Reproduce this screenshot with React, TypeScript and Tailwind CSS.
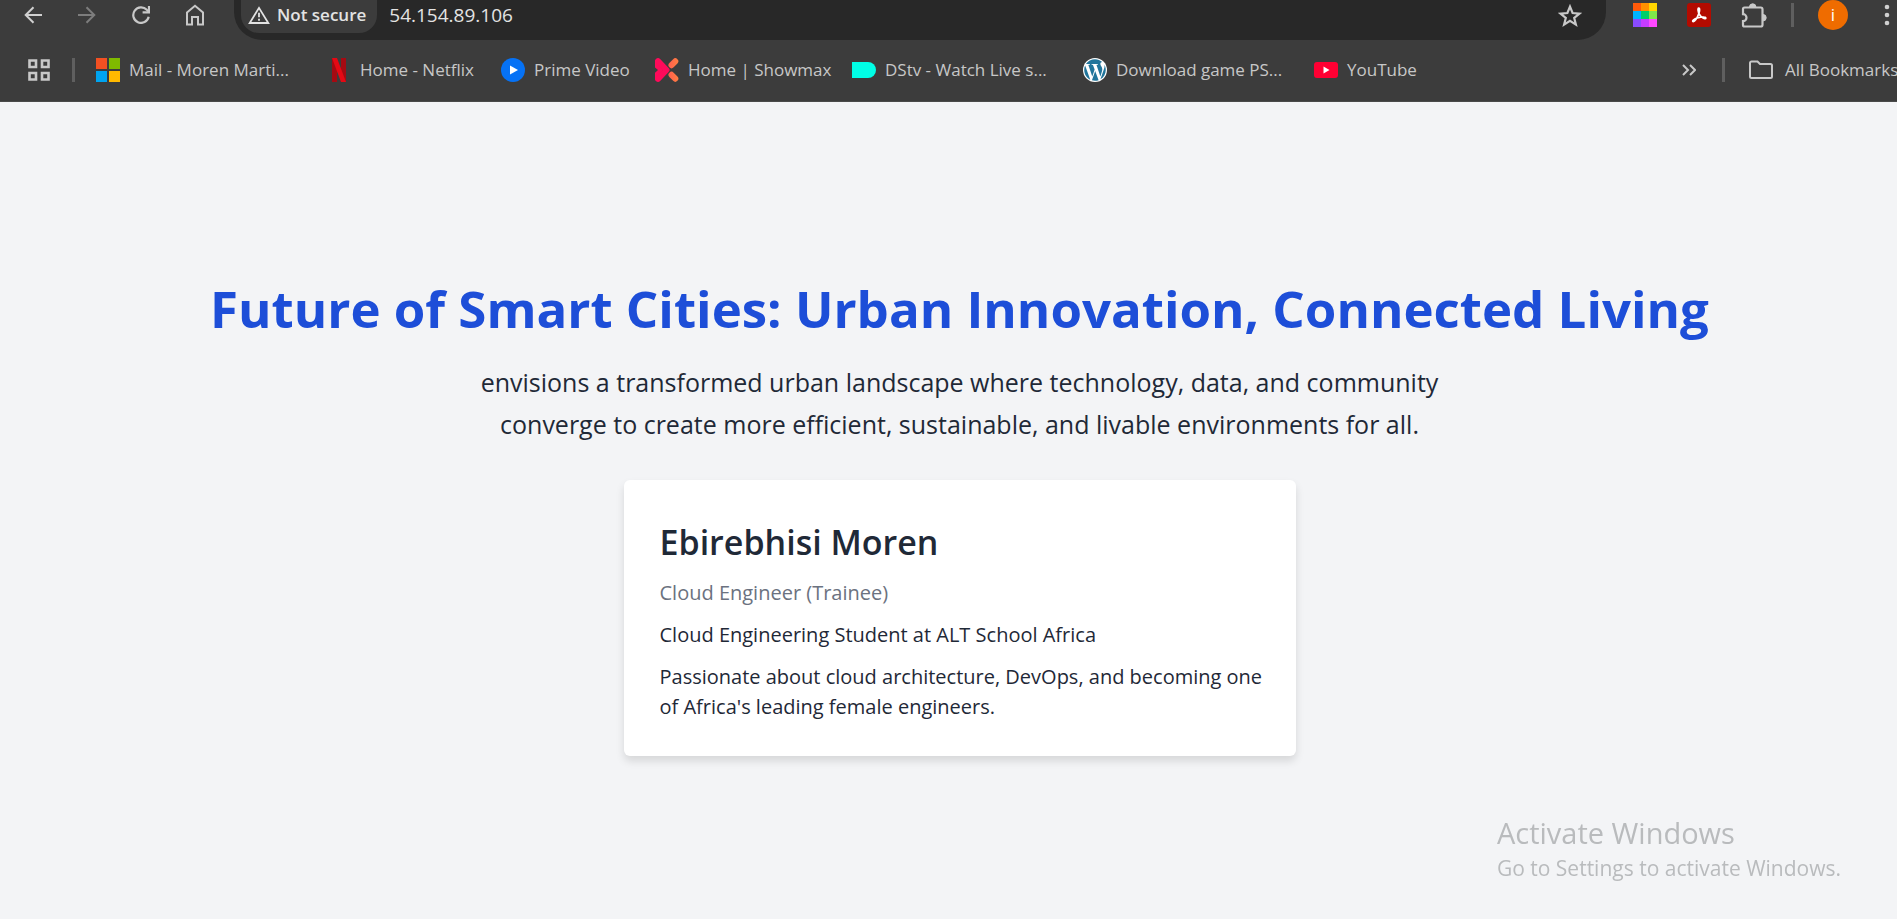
import { useId, type ReactNode } from "react";

const barIcon = "block shrink-0";

function BackIcon() {
  return (
    <svg className={barIcon} width="18" height="18" viewBox="0 0 18 18" fill="none" stroke="#d0d0d0" strokeWidth="2">
      <path d="M18 9H2M9.5 1.2 1.7 9l7.8 7.8" />
    </svg>
  );
}

function ForwardIcon() {
  return (
    <svg className={barIcon} width="18" height="18" viewBox="0 0 18 18" fill="none" stroke="#7d7d7d" strokeWidth="2">
      <path d="M0 9h16M8.5 1.2 16.3 9l-7.8 7.8" />
    </svg>
  );
}

function ReloadIcon() {
  return (
    <svg className={barIcon} width="18" height="18" viewBox="0 0 18 18" fill="none" stroke="#c8c8c8" strokeWidth="2.2">
      <path d="M16.7 10.8A7.8 7.8 0 1 1 14.8 3.8L17 6" />
      <path d="M17 0v6.4h-6.4" />
    </svg>
  );
}

function HomeIcon() {
  return (
    <svg className={barIcon} width="18" height="22" viewBox="0 0 18 22" fill="none" stroke="#c8c8c8" strokeWidth="2">
      <path d="M1 8.4 9 1.8l8 6.6v12.100h-5V13H6v7.500H1z" />
    </svg>
  );
}

function WarningIcon() {
  return (
    <svg className={barIcon} width="22" height="18" viewBox="0 0 22 18" fill="none" stroke="#e3e3e3" strokeWidth="1.8">
      <path d="M11 1.9 20.3 17H1.7z" />
      <path d="M11 6.8v4.4M11 12.8v2" />
    </svg>
  );
}

function StarIcon() {
  return (
    <svg className={barIcon} width="24" height="23" viewBox="0 0 24 23" fill="none" stroke="#c8c8c8" strokeWidth="2.2">
      <path d="m12 2.600 2.600 6.400 6.900.600-5.300 4.400 1.700 6.600L12 16.900l-5.900 3.700L7.800 14 2.500 9.600 9.400 9z" />
    </svg>
  );
}

const paletteCells = ["#ff5a0a", "#ff9100", "#ffd500", "#00b4ff", "#00cf6a", "#7de64b", "#8a4bff", "#c63cff", "#ff48ff"];

function PaletteIcon() {
  return (
    <svg className={barIcon} width="24" height="24" viewBox="0 0 24 24" shapeRendering="crispEdges">
      {paletteCells.map((fill, i) => (
        <rect key={fill} x={(i % 3) * 8} y={Math.floor(i / 3) * 8} width="8" height="8" fill={fill} />
      ))}
    </svg>
  );
}

function AcrobatIcon() {
  return (
    <svg className={barIcon} width="24" height="24" viewBox="0 0 24 24" fill="none">
      <rect width="24" height="24" rx="3" fill="#b30b00" />
      <path
        d="M11.700 5.200c1.300-.1 1 3 .2 5.100-1.100 3-3.800 8.500-5.700 8.300-1.700-.5.900-2.900 5.100-3.900 3.600-.9 7.700-1.100 7.500.6-.3 1.500-4.700-.9-6.500-4-1.200-2.200-1.900-6-.6-6.100z"
        stroke="#fff"
        strokeWidth="1.7"
      />
    </svg>
  );
}

function PuzzleIcon() {
  return (
    <svg className={barIcon} width="26" height="25" viewBox="0 0 26 25">
      <path
        d="M3.500 4.500h16.200a1.800 1.800 0 0 1 1.800 1.800v15.400a1.800 1.800 0 0 1-1.800 1.800H3.500A1.500 1.500 0 0 1 2 22v-3.800a3.400 3.400 0 0 0 0-7V6a1.500 1.500 0 0 1 1.500-1.500z"
        fill="none"
        stroke="#c8c8c8"
        strokeWidth="2.2"
      />
      <path d="M8.500 4a3.200 3.200 0 0 1 6.400 0zM22 11.500a3.200 3.200 0 0 1 0 6.400z" fill="#c8c8c8" stroke="#c8c8c8" />
    </svg>
  );
}

function MenuDotsIcon() {
  return (
    <svg className={barIcon} width="6" height="24" viewBox="0 0 6 24" fill="#d0d0d0">
      <circle cx="3" cy="4" r="2.3" />
      <circle cx="3" cy="12" r="2.3" />
      <circle cx="3" cy="20" r="2.3" />
    </svg>
  );
}

function AppsIcon() {
  return (
    <svg className={barIcon} width="22" height="22" viewBox="0 0 22 22" fill="none" stroke="#c8c8c8" strokeWidth="2.6">
      <path d="M1.500 1.500h6.500v6.500H1.500zM14 1.500h6.500v6.500H14zM1.500 14h6.500v6.500H1.500zM14 14h6.500v6.500H14z" />
    </svg>
  );
}

function MicrosoftIcon() {
  return (
    <svg className={barIcon} width="24" height="24" viewBox="0 0 24 24">
      <path fill="#f25022" d="M0 0h11v11H0z" />
      <path fill="#7fba00" d="M13 0h11v11H13z" />
      <path fill="#00a4ef" d="M0 13h11v11H0z" />
      <path fill="#ffb900" d="M13 13h11v11H13z" />
    </svg>
  );
}

function NetflixIcon() {
  return (
    <svg className={barIcon} width="24" height="24" viewBox="0 0 24 24">
      <path fill="#a50a12" d="M5 0h5v24H5zM14 0h5v24h-5z" />
      <path fill="#e50914" d="M5 0h5l9 24h-5z" />
    </svg>
  );
}

function PrimeIcon() {
  return (
    <svg className={barIcon} width="24" height="24" viewBox="0 0 24 24">
      <circle cx="12" cy="12" r="12" fill="#0672f5" />
      <path fill="#fff" d="m9 7.500 8 4.500-8 4.500z" />
    </svg>
  );
}

function ShowmaxIcon() {
  const id = useId();
  return (
    <svg className={barIcon} width="24" height="24" viewBox="0 0 24 24" fill="none" strokeLinecap="round">
      <defs>
        <linearGradient id={id} x1="12" y1="0" x2="24" y2="0" gradientUnits="userSpaceOnUse">
          <stop stopColor="#ff5a50" />
          <stop offset="1" stopColor="#ff8040" />
        </linearGradient>
      </defs>
      <path d="m16.500 7.200 3.800-3.900M16.500 16.800l3.800 3.900" stroke={`url(#${id})`} strokeWidth="6" />
      <path d="M3 3.200 11.500 12 3 20.800" stroke="#ff0a5a" strokeWidth="6" strokeLinejoin="round" />
      <path d="M0 3v18l8-9z" fill="#ff0a5a" />
      <path d="M-1 8.500 3 12l-4 3.500z" fill="#3c3c3c" />
    </svg>
  );
}

function DstvIcon() {
  return (
    <svg className={barIcon} width="24" height="24" viewBox="0 0 24 24">
      <path fill="#00ffe6" d="M0 4h16a8 8 0 0 1 0 16H0z" />
    </svg>
  );
}

function WordPressIcon() {
  return (
    <svg className={barIcon} width="24" height="24" viewBox="0 0 24 24">
      <circle cx="12" cy="12" r="12" fill="#fff" />
      <path
        fill="#21759b"
        d="M21.469 6.825c.84 1.537 1.318 3.300 1.318 5.175 0 3.979-2.156 7.456-5.363 9.325l3.295-9.527c.615-1.540.82-2.771.82-3.864 0-.405-.026-.780-.070-1.110m-7.981.105c.647-.030 1.232-.105 1.232-.105.582-.075.514-.930-.067-.899 0 0-1.755.135-2.880.135-1.064 0-2.850-.150-2.850-.150-.585-.030-.661.855-.075.885 0 0 .540.061 1.125.090l1.680 4.605-2.370 7.080L5.354 6.900c.649-.030 1.234-.100 1.234-.100.585-.075.516-.930-.065-.896 0 0-1.746.138-2.874.138-.200 0-.438-.008-.690-.015C4.911 3.150 8.235 1.215 12 1.215c2.809 0 5.365 1.072 7.286 2.833-.046-.003-.091-.009-.141-.009-1.060 0-1.812.923-1.812 1.914 0 .890.513 1.643 1.060 2.531.411.720.890 1.643.890 2.977 0 .915-.354 1.994-.821 3.479l-1.075 3.585-3.900-11.610.001.014zM12 22.784c-1.059 0-2.081-.153-3.048-.437l3.237-9.406 3.315 9.087c.024.053.050.101.078.149-1.120.393-2.325.609-3.582.609M1.211 12c0-1.564.336-3.050.935-4.390L7.290 21.709C3.694 19.960 1.212 16.271 1.211 12"
      />
    </svg>
  );
}

function YouTubeIcon() {
  return (
    <svg className={barIcon} width="24" height="24" viewBox="0 0 24 24">
      <rect y="4" width="24" height="16" rx="3" fill="#ff0033" />
      <path fill="#fff" d="m9.500 8.500 6 3.500-6 3.500z" />
    </svg>
  );
}

function ChevronsIcon() {
  return (
    <svg className={barIcon} width="14" height="12" viewBox="0 0 14 12" fill="none" stroke="#c8c8c8" strokeWidth="2">
      <path d="m1 1 5 5-5 5M8 1l5 5-5 5" />
    </svg>
  );
}

function FolderIcon() {
  return (
    <svg className={barIcon} width="24" height="19" viewBox="0 0 24 19" fill="none" stroke="#c8c8c8" strokeWidth="2">
      <path d="M2.500 1.500h6L11 4h10.500A1.500 1.500 0 0 1 23 5.500v11a1.500 1.500 0 0 1-1.500 1.500h-19A1.500 1.500 0 0 1 1 16.500V3a1.500 1.500 0 0 1 1.500-1.500z" />
    </svg>
  );
}

function Bookmark({ icon, label, width }: { icon: ReactNode; label: string; width: string }) {
  return (
    <a href="#" className={`flex shrink-0 items-center gap-[9px] ${width}`}>
      {icon}
      <span className="whitespace-nowrap">{label}</span>
    </a>
  );
}

function Toolbar() {
  return (
    <div className="flex h-10 items-start">
      <nav aria-label="Navigation" className="flex h-[30px] w-[234px] shrink-0 items-center gap-9 pl-6">
        <button type="button" aria-label="Back"><BackIcon /></button>
        <button type="button" aria-label="Forward"><ForwardIcon /></button>
        <button type="button" aria-label="Reload"><ReloadIcon /></button>
        <button type="button" aria-label="Home"><HomeIcon /></button>
      </nav>
      <div className="flex h-10 min-w-0 flex-1 items-start rounded-b-[28px] bg-[#282828] pr-6 pl-[7px]">
        <button
          type="button"
          className="flex h-[33px] shrink-0 items-center gap-[7px] rounded-b-[18px] bg-[#3c3c3c] pr-[11px] pb-[3px] pl-[7px] text-[17px] font-semibold text-[#e3e3e3]"
        >
          <WarningIcon />
          Not secure
        </button>
        <input
          type="text"
          aria-label="Address"
          defaultValue="54.154.89.106"
          className="h-[30px] min-w-0 flex-1 bg-transparent px-3 text-[19px] text-[#e3e3e3] outline-none"
        />
        <button type="button" aria-label="Bookmark this page" className="flex h-[30px] items-center"><StarIcon /></button>
      </div>
      <div className="flex h-[30px] shrink-0 items-center pl-[27px]">
        <button type="button" aria-label="Color palette" className="mr-[30px]"><PaletteIcon /></button>
        <button type="button" aria-label="Adobe Acrobat" className="mr-[30px]"><AcrobatIcon /></button>
        <button type="button" aria-label="Extensions" className="mr-6"><PuzzleIcon /></button>
        <span className="mr-6 h-6 w-[3px] bg-[#5f5f5f]" />
        <button
          type="button"
          aria-label="Profile"
          className="mr-9 flex size-[30px] items-center justify-center rounded-full bg-[#ef6c00] text-[17px] text-white"
        >
          i
        </button>
        <button type="button" aria-label="Menu" className="mr-[7px]"><MenuDotsIcon /></button>
      </div>
    </div>
  );
}

function BookmarksBar() {
  return (
    <div className="flex h-[62px] items-center overflow-hidden border-b border-[#4a4a4a] pb-[2px] pl-7 text-[17px] text-[#c7c7c7]">
      <button type="button" aria-label="Apps"><AppsIcon /></button>
      <span className="mr-[21px] ml-[22px] h-6 w-[3px] shrink-0 bg-[#5f5f5f]" />
      <nav aria-label="Bookmarks" className="flex min-w-0 flex-1 items-center">
        <Bookmark width="w-[231px]" icon={<MicrosoftIcon />} label="Mail - Moren Marti..." />
        <Bookmark width="w-[174px]" icon={<NetflixIcon />} label="Home - Netflix" />
        <Bookmark width="w-[154px]" icon={<PrimeIcon />} label="Prime Video" />
        <Bookmark width="w-[197px]" icon={<ShowmaxIcon />} label="Home | Showmax" />
        <Bookmark width="w-[231px]" icon={<DstvIcon />} label="DStv - Watch Live s..." />
        <Bookmark width="w-[231px]" icon={<WordPressIcon />} label="Download game PS..." />
        <Bookmark width="w-[130px]" icon={<YouTubeIcon />} label="YouTube" />
      </nav>
      <button type="button" aria-label="More bookmarks"><ChevronsIcon /></button>
      <span className="mr-6 ml-[26px] h-6 w-[3px] shrink-0 bg-[#5f5f5f]" />
      <button type="button" className="flex w-[148px] shrink-0 items-center gap-3 whitespace-nowrap">
        <FolderIcon />
        All Bookmarks
      </button>
    </div>
  );
}

export default function App() {
  return (
    <div className="flex min-h-screen flex-col overflow-hidden bg-[#f3f4f6] font-['Open_Sans','Noto_Sans',sans-serif]">
      <header className="bg-[#3c3c3c]">
        <Toolbar />
        <BookmarksBar />
      </header>
      <main className="ml-[22px] flex flex-1 flex-col items-center px-6 pt-[173px] pb-10 text-[#1f2937]">
        <h1 className="text-center text-[51px] leading-[66px] font-bold text-[#1d4ed8]">
          Future of Smart Cities: Urban Innovation, Connected Living
        </h1>
        <p className="mt-5 max-w-[1000px] text-center text-[25px] leading-[42px]">
          envisions a transformed urban landscape where technology, data, and community converge to create more
          efficient, sustainable, and livable environments for all.
        </p>
        <section className="mt-[35px] w-full max-w-2xl rounded-md bg-white pt-9 pr-7 pb-[34px] pl-9 shadow-[0_5px_8px_rgba(0,0,0,0.12)]">
          <h2 className="text-[34px] leading-[52px] font-semibold">Ebirebhisi Moren</h2>
          <p className="mt-[10px] text-[20px] leading-[30px] text-[#6b7280]">Cloud Engineer (Trainee)</p>
          <p className="mt-3 text-[20px] leading-[30px]">Cloud Engineering Student at ALT School Africa</p>
          <p className="mt-3 text-[20px] leading-[30px]">
            Passionate about cloud architecture, DevOps, and becoming one of Africa's leading female engineers.
          </p>
        </section>
      </main>
      <aside className="pointer-events-none fixed right-14 bottom-9 text-[#b9bbbd]">
        <p className="text-[29px] leading-10">Activate Windows</p>
        <p className="text-[21px] leading-[30px]">Go to Settings to activate Windows.</p>
      </aside>
    </div>
  );
}
